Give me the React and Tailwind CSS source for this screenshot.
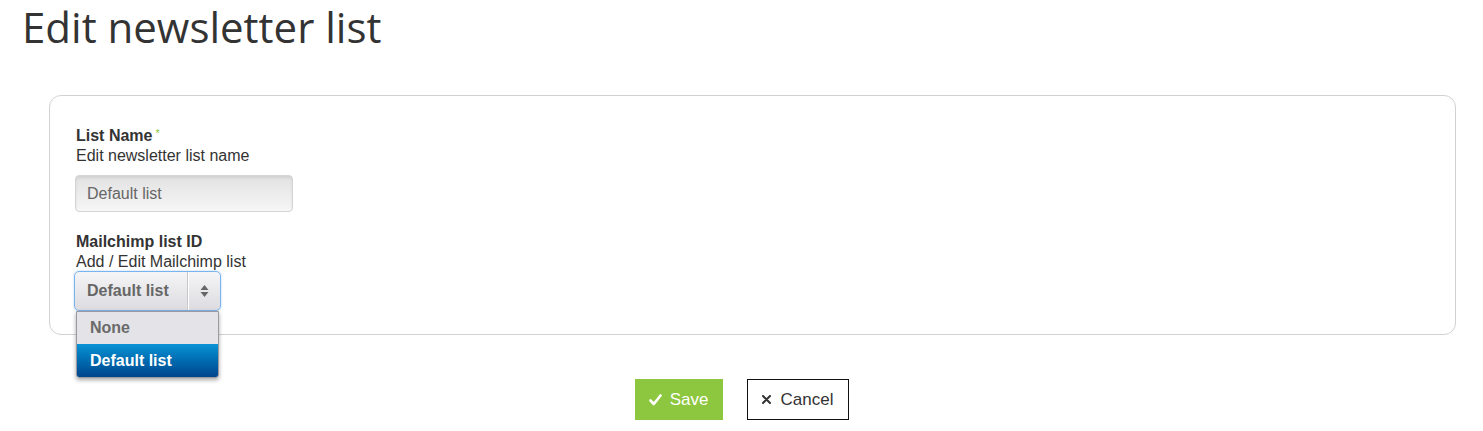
import React from 'react';

export default function App() {
    return (
        <div className="min-h-[431px] bg-white text-[#333]" style={{ fontFamily: '"Liberation Sans", Arial, sans-serif' }}>
            {/* page title */}
            <h1 className="pl-[22px] text-[42px] leading-[54px] text-[#333] font-normal" style={{ fontFamily: '"Open Sans", sans-serif' }}>
                Edit newsletter list
            </h1>

            {/* form panel */}
            <div className="mt-[41px] ml-[49px] mr-[27px] h-[240px] rounded-[12px] border border-[#d2d2d2] pt-[30px] pl-[26px]">
                <div className="text-[16px] leading-[20px]">
                    <div className="font-bold text-[#333]">
                        List Name<sup className="ml-[3px] text-[11px] font-normal text-[#8dc63f] relative -top-[4px]">*</sup>
                    </div>
                    <div className="text-[#333]">Edit newsletter list name</div>
                </div>
                <div className="mt-[9px] -ml-px flex h-[37px] w-[218px] items-center rounded-[4px] border border-[#d4d4d4] bg-gradient-to-b from-[#e2e2e2] to-[#f6f6f6] pl-[11px] text-[16px] text-[#666] shadow-[inset_0_2px_3px_rgba(0,0,0,0.08)]">
                    Default list
                </div>

                <div className="mt-[20px] text-[16px] leading-[20px]">
                    <div className="font-bold text-[#333]">Mailchimp list ID</div>
                    <div className="text-[#333]">Add / Edit Mailchimp list</div>
                </div>

                <div className="relative -mt-px -ml-[2px] w-[147px]">
                    <div className="flex h-[40px] items-stretch rounded-[5px] border border-[#7ab4ee] bg-gradient-to-b from-[#f5f5f7] to-[#dcdce0] shadow-[0_0_2px_rgba(80,150,230,0.5)]">
                        <div className="flex flex-1 items-center pl-[12px] text-[16px] font-bold text-[#666]">Default list</div>
                        <div className="w-px bg-[#c8c8cc] shadow-[1px_0_0_#fff]" />
                        <div className="flex w-[32px] items-center justify-center">
                            <svg width="9" height="14" viewBox="0 0 9 14">
                                <path d="M4.5 1 L8.5 6 L0.5 6 Z" fill="#666" />
                                <path d="M4.5 13 L8.5 8 L0.5 8 Z" fill="#666" />
                            </svg>
                        </div>
                    </div>

                    {/* open option list */}
                    <div className="absolute left-[2px] top-[40px] z-10 w-[143px] overflow-hidden rounded-b-[3px] border border-[#9a9aa0] shadow-[0_2px_4px_rgba(0,0,0,0.35)]">
                        <div className="flex h-[32px] items-center bg-[#e4e4e8] pl-[13px] text-[16px] font-bold text-[#6a6a6a]">None</div>
                        <div className="flex h-[33px] items-center bg-gradient-to-b from-[#0b93d6] to-[#00458c] pl-[13px] text-[16px] font-bold text-white">Default list</div>
                    </div>
                </div>
            </div>

            {/* actions */}
            <div className="mt-[44px] flex justify-center gap-[24px]">
                <button className="flex h-[41px] w-[88px] items-center justify-center gap-[8px] bg-[#8dc63f] text-[17px] text-white">
                    <svg width="13" height="12" viewBox="0 0 13 12">
                        <path d="M1.5 6.5 L4.8 10 L11.5 1.5" fill="none" stroke="#fff" strokeWidth="2.6" strokeLinecap="round" strokeLinejoin="round" />
                    </svg>
                    Save
                </button>
                <button className="flex h-[41px] w-[102px] items-center justify-center gap-[10px] border border-[#111] bg-white text-[17px] text-[#333]">
                    <svg width="9" height="9" viewBox="0 0 9 9">
                        <path d="M1 1 L8 8 M8 1 L1 8" stroke="#333" strokeWidth="2" strokeLinecap="round" />
                    </svg>
                    Cancel
                </button>
            </div>
        </div>
    );
}
